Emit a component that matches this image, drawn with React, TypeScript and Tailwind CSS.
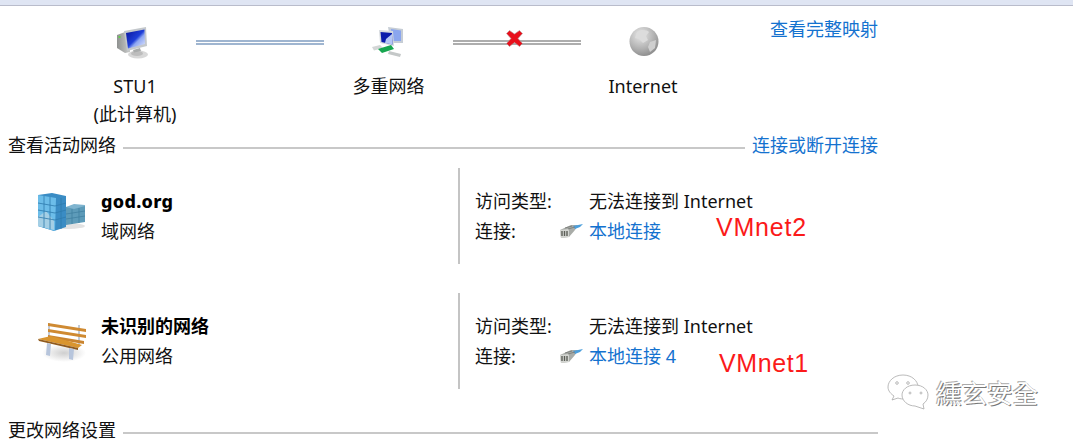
const FONT = "font-['Noto_Sans','Noto_Sans_CJK_SC',sans-serif]";

function ComputerIcon() {
  return (
    <svg width="36" height="36" viewBox="0 0 36 36" className="block">
      <defs>
        <linearGradient id="screen" x1="0" y1="0" x2="1" y2="1">
          <stop offset="0" stopColor="#08129a" />
          <stop offset="0.5" stopColor="#1f3fd8" />
          <stop offset="0.62" stopColor="#8ea6f2" />
          <stop offset="1" stopColor="#e6ecff" />
        </linearGradient>
        <linearGradient id="tower" x1="0" y1="0" x2="1" y2="0">
          <stop offset="0" stopColor="#8f9190" />
          <stop offset="1" stopColor="#c9cbca" />
        </linearGradient>
      </defs>
      <ellipse cx="21" cy="27.500" rx="10" ry="4" fill="#d8d8d8" />
      <ellipse cx="20" cy="26.500" rx="6" ry="2.500" fill="#bdbdbd" />
      <path d="M0 8 L8 5 L13 7 L13 25 L8 26 L0 21 Z" fill="url(#tower)" />
      <rect x="1.500" y="9" width="2" height="2" fill="#62d04c" />
      <path d="M7 4 L29 0 L30 19 L10 24 Z" fill="#c4c8cc" />
      <path d="M9 6 L27.500 2.500 L28 17 L11 21.500 Z" fill="url(#screen)" />
      <path d="M16 23 L23 21 L24 24 L17 25.500 Z" fill="#a9acac" />
    </svg>
  );
}

function MultiNetworkIcon() {
  return (
    <svg width="36" height="36" viewBox="0 0 36 36" className="block">
      <path d="M17 1 L32 3 L32 17 L20 17 Z" fill="#c6cdd5" />
      <path d="M20 3 L30 4.500 L30 15 L21 15 Z" fill="#8ba6ee" />
      <path d="M8 4 L22 5 L23 20 L9 17 Z" fill="#d6dade" />
      <path d="M9.500 6 L21 7 L21.500 18.500 L10.500 16 Z" fill="#0a1cab" />
      <path d="M15 13 L21 8 L21.500 18.500 L14 17 Z" fill="#b4c6f6" />
      <path d="M1 21 L9 19 L12 22 L3 24.500 Z" fill="#d3d6d6" />
      <path d="M7 23 L20 19 L23 23 L11 27 Z" fill="#17a650" />
      <path d="M18 25 L30 28 L29 31 L17 28 Z" fill="#c4c8c8" />
    </svg>
  );
}

function GlobeIcon() {
  return (
    <svg width="32" height="32" viewBox="0 0 32 32" className="block">
      <defs>
        <radialGradient id="globe" cx="0.38" cy="0.28" r="0.85">
          <stop offset="0" stopColor="#e8e8e8" />
          <stop offset="0.55" stopColor="#b2b2b2" />
          <stop offset="1" stopColor="#7f7f7f" />
        </radialGradient>
      </defs>
      <circle cx="17" cy="15.500" r="14.500" fill="url(#globe)" />
      <path d="M10 6 C14 3 20 4 22 6 L19 10 L21 14 L16 17 L12 13 L8 12 Z" fill="#dcdcdc" />
      <path d="M23 16 L29 14 L28 22 L23 26 L21 21 Z" fill="#cfcfcf" />
    </svg>
  );
}

function RedCross() {
  return (
    <svg width="17" height="17" viewBox="0 0 17 17" className="block">
      <path d="M0.500 3.500 L3.500 0.500 L8.500 4 L13.500 0.500 L16.500 3.500 L12 8.500 L16.500 13.500 L13.500 16.500 L8.500 12.500 L3.500 16.500 L0.500 13.500 L5 8.500 Z" fill="#e8101c" stroke="#b0a0a0" strokeWidth="0.6" />
    </svg>
  );
}

function BuildingIcon() {
  return (
    <svg width="48" height="40" viewBox="0 0 48 40" className="block">
      <ellipse cx="30" cy="33" rx="17" ry="3" fill="#e2e2e2" />
      <path d="M28 14 L47 12 L47 29 L28 32 Z" fill="#5d9bb9" />
      <path d="M28 14 L36 16 L47 13 L47 12 L36 11 Z" fill="#7fb4cf" />
      <path d="M0 2 L14 0 L28 3 L28 34 L16 38 L0 33 Z" fill="#3a8cc4" />
      <path d="M0 2 L18 5 L17 38 L0 33 Z" fill="#6cbde9" />
      <path d="M0 24 L8 18 L16 28 L16 37 L0 33 Z" fill="#a4cfe5" />
      <path d="M6 3 L6 35 M12 4 L12 36 M23 5 L23 36 M0 10 L17 13 L28 10 M0 17 L17 20 L28 17 M0 24 L17 27 L28 24" stroke="#2f7bad" strokeWidth="0.8" fill="none" />
      <path d="M34 16 L34 31 M41 15 L41 30 M28 21 L47 18 M28 26 L47 23" stroke="#3e7d9e" strokeWidth="0.7" fill="none" />
    </svg>
  );
}

function BenchIcon() {
  return (
    <svg width="48" height="42" viewBox="0 0 48 42" className="block">
      <defs>
        <radialGradient id="benchShadow">
          <stop offset="0" stopColor="#cfcfcf" />
          <stop offset="1" stopColor="#ffffff" />
        </radialGradient>
      </defs>
      <ellipse cx="26" cy="32" rx="22" ry="9" fill="url(#benchShadow)" />
      <path d="M10 2 L12 2 L12 20 L10 20 Z M40 4 L42 4 L42 24 L40 24 Z" fill="#c2cbd8" />
      <path d="M10 2 L48 8 L48 11 L10 5 Z" fill="#cf8a32" />
      <path d="M10 8 L48 14 L48 17 L10 11 Z" fill="#cf8a32" />
      <path d="M10 14 L46 20 L46 23 L10 17 Z" fill="#c98430" />
      <path d="M0 18 L13 15 L44 24 L40 27 Z" fill="#d9952f" />
      <path d="M0 18 L40 27 L40 29 L1 20 Z" fill="#8f5a1e" />
      <path d="M9 22 L13 23 L12 35 L8 34 Z M31 27 L36 28 L35 39 L31 38 Z" fill="#b7c5dc" />
    </svg>
  );
}

function PortIcon() {
  return (
    <svg width="24" height="14" viewBox="0 0 24 14" className="block">
      <path d="M0 6 L11 1 L18 1 L15 6 L9 13 L1 14 Z" fill="#a9aca8" />
      <path d="M0 6 L9 5 L9 13 L1 14 Z" fill="#d4d6d2" />
      <path d="M13 2 L23 0 L20 3 L15 5 Z" fill="#4c9fdc" />
      <path d="M2 7 L2 12 M4.500 7 L4.500 12 M7 7 L7 12" stroke="#5c5e57" strokeWidth="1.400" />
      <path d="M5 4 L12 2 M8 5 L15 3" stroke="#7b7d79" strokeWidth="0.900" />
    </svg>
  );
}

function Pipe({ tone }: { tone: string }) {
  return <div className={`h-[5px] w-[128px] border-y-2 ${tone}`} />;
}

function SectionHead({ title, link }: { title: string; link?: string }) {
  return (
    <div className="flex items-center pl-[8px] w-[878px] h-[20px]">
      <span className="text-[18px] leading-[20px] text-[#111] whitespace-nowrap">{title}</span>
      <div className="flex-1 h-[2px] bg-[#c8c8c8] ml-[7px] mt-[6px]" />
      {link && <a className="ml-[7px] text-[18px] leading-[20px] text-[#1472cf] whitespace-nowrap">{link}</a>}
    </div>
  );
}

function NetworkRow({ icon, iconTop, name, kind, conn, nameClass }: { icon: React.ReactNode; iconTop: string; name: string; kind: string; conn: string; nameClass: string }) {
  return (
    <div className="flex w-[878px] h-[96px]">
      <div className="w-[458px] flex">
        <div className={`w-[101px] pl-[38px] shrink-0 ${iconTop}`}>{icon}</div>
        <div className="pt-[18px]">
          <div className={`text-[18px] leading-[30px] text-black ${nameClass}`}>{name}</div>
          <div className="text-[18px] leading-[30px] text-[#111]">{kind}</div>
        </div>
      </div>
      <div className="w-[2px] bg-[#c4c4c4]" />
      <div className="pl-[15px] pt-[18px] text-[18px] leading-[30px] text-[#111]">
        <div className="flex">
          <span className="w-[114px]">访问类型:</span>
          <span>无法连接到 Internet</span>
        </div>
        <div className="flex items-center">
          <span className="w-[85px]">连接:</span>
          <span className="w-[29px]"><PortIcon /></span>
          <a className="text-[#1472cf]">{conn}</a>
        </div>
      </div>
    </div>
  );
}

export default function App() {
  return (
    <div className={`relative w-[1073px] h-[440px] overflow-hidden bg-white ${FONT}`}>
      <div className="h-[6px] bg-[#dfe5f3] border-b border-[#b9bccb]" />

      <div className="flex w-[878px] h-[129px] text-[18px] text-[#111] leading-[28px]">
        <div className="w-[196px] pl-[74px] flex flex-col items-center shrink-0">
          <div className="mt-[21px] h-[43px]"><ComputerIcon /></div>
          <div className="mt-[2px] text-center whitespace-nowrap">STU1<br />(此计算机)</div>
        </div>
        <div className="mt-[34px]"><Pipe tone="border-[#9fb5d0]" /></div>
        <div className="w-[129px] flex flex-col items-center shrink-0">
          <div className="mt-[20px] h-[44px]"><MultiNetworkIcon /></div>
          <div className="mt-[2px] whitespace-nowrap">多重网络</div>
        </div>
        <div className="relative mt-[34px] h-fit">
          <Pipe tone="border-[#adadad]" />
          <div className="absolute left-[53px] top-[-10px]"><RedCross /></div>
        </div>
        <div className="w-[124px] flex flex-col items-center shrink-0">
          <div className="mt-[20px] h-[44px]"><GlobeIcon /></div>
          <div className="mt-[2px] whitespace-nowrap">Internet</div>
        </div>
        <a className="ml-auto mt-[9px] text-[#1472cf] whitespace-nowrap">查看完整映射</a>
      </div>

      <SectionHead title="查看活动网络" link="连接或断开连接" />
      <div className="mt-[13px]">
        <NetworkRow icon={<BuildingIcon />} iconTop="pt-[25px]" name="god.org" kind="域网络" conn="本地连接" nameClass="font-extrabold tracking-[0.3px]" />
      </div>
      <div className="mt-[29px]">
        <NetworkRow icon={<BenchIcon />} iconTop="pt-[28px]" name="未识别的网络" kind="公用网络" conn="本地连接 4" nameClass="font-bold" />
      </div>
      <div className="mt-[31px]">
        <SectionHead title="更改网络设置" />
      </div>

      <span className="absolute left-[716px] top-[211px] text-[25px] leading-[32px] text-[#fb1a1a] font-['Liberation_Sans',sans-serif] tracking-[0.8px]">VMnet2</span>
      <span className="absolute left-[719px] top-[347px] text-[25px] leading-[32px] text-[#fb1a1a] font-['Liberation_Sans',sans-serif] tracking-[0.6px]">VMnet1</span>

      <div className="absolute left-[886px] top-[373px] flex items-center">
        <svg width="44" height="38" viewBox="0 0 44 38" fill="#fff" stroke="#a8a8a8" strokeWidth="0.8" className="block">
          <path d="M17 2 C8 2 2 8 2 14 C2 18 5 21 8 23 L6 27 L12 25 C14 26 17 26 20 26 C28 26 32 20 32 14 C32 8 26 2 17 2 Z" />
          <path d="M29 12 C21 12 16 17 16 22 C16 28 22 33 29 33 L38 36 L37 31 C40 29 42 26 42 22 C42 17 37 12 29 12 Z" />
          <circle cx="11" cy="10" r="1.300" />
          <circle cx="22" cy="10" r="1.300" />
          <circle cx="24" cy="20" r="1" />
          <circle cx="35" cy="20" r="1" />
        </svg>
        <span className="ml-[6px] text-[25.500px] leading-[32px] text-white font-['Noto_Sans_CJK_TC',sans-serif] [text-shadow:1px_1px_0_#777,-1px_-1px_0_#aaa]">纁玄安全</span>
      </div>
    </div>
  );
}
